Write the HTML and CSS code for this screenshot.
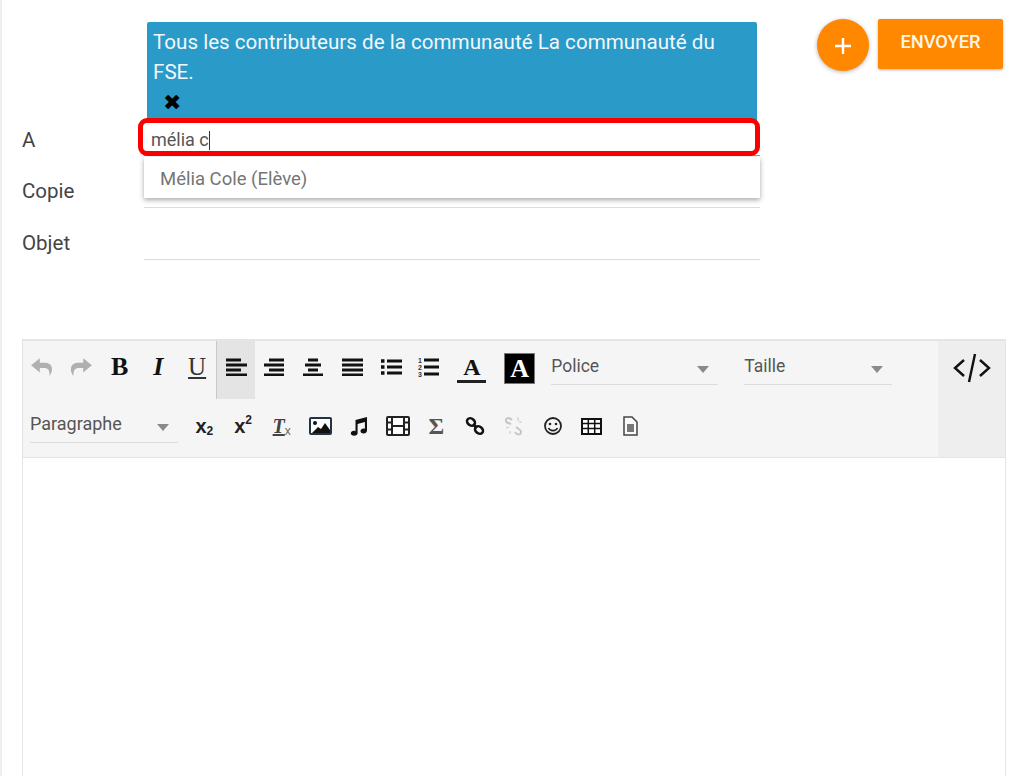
FILE: index.html
```html
<!DOCTYPE html>
<html lang="fr">
<head>
<meta charset="utf-8">
<title>Message</title>
<link rel="stylesheet" href="styles.css">
</head>
<body>
<div class="page">
  <div class="head">
    <form class="fields">
      <div class="row row-to">
        <div class="label label-to">A</div>
        <div class="to-col">
          <div class="chip">
            <div class="chip-text">Tous les contributeurs de la communauté La communauté du FSE.</div>
            <div class="chip-x">✖</div>
          </div>
          <div class="input">
            <span class="typed">mélia c</span><span class="caret"></span>
            <div class="highlight"></div>
            <div class="suggest">Mélia Cole (Elève)</div>
          </div>
        </div>
      </div>
      <div class="row">
        <div class="label">Copie</div>
        <div class="line"></div>
      </div>
      <div class="row">
        <div class="label">Objet</div>
        <div class="line"></div>
      </div>
    </form>
    <div class="actions">
      <div class="fab"><svg width="18" height="18" viewBox="0 0 18 18"><path d="M9 1v16M1 9h16" stroke="#fff" stroke-width="2.4"/></svg></div>
      <div class="send">ENVOYER</div>
    </div>
  </div>

  <div class="editor">
    <div class="toolbar">
      <div class="tools">
        <div class="tool-row row-one">
          <div class="tool"><svg width="24" height="20" viewBox="0 0 22 18"><path fill="#b0b0b0" d="M9 1 1 7.500 9 14v-4h4c3.500 0 5 2 5 7 3.500-4.500 3.500-12-5-12H9z"/></svg></div>
          <div class="tool"><svg width="24" height="20" viewBox="0 0 22 18"><path fill="#b0b0b0" d="M13 1l8 6.500L13 14v-4H9c-3.500 0-5 2-5 7-3.500-4.500-3.500-12 5-12h4z"/></svg></div>
          <div class="tool serif-b">B</div>
          <div class="tool serif-i">I</div>
          <div class="tool serif-u">U</div>
          <div class="tool tool-active"><svg width="22" height="18" viewBox="0 0 22 18"><path d="M1 2h15M1 7h21M1 12h15M1 17h21" stroke="#111" stroke-width="2.800"/></svg></div>
          <div class="tool"><svg width="22" height="18" viewBox="0 0 22 18"><path d="M6 2h15M1 7h20M6 12h15M1 17h20" stroke="#111" stroke-width="2.800"/></svg></div>
          <div class="tool"><svg width="22" height="18" viewBox="0 0 22 18"><path d="M6 2h10M3 7h16M6 12h10M1 17h20" stroke="#111" stroke-width="2.800"/></svg></div>
          <div class="tool"><svg width="22" height="18" viewBox="0 0 22 18"><path d="M1 2h21M1 7h21M1 12h21M1 17h21" stroke="#111" stroke-width="2.800"/></svg></div>
          <div class="tool"><svg width="22" height="18" viewBox="0 0 22 18"><path d="M1 3h3.500M1 9h3.500M1 15h3.500" stroke="#111" stroke-width="3.500"/><path d="M7 3h15M7 9h15M7 15h15" stroke="#111" stroke-width="2.800"/></svg></div>
          <div class="tool"><svg width="22" height="22" viewBox="0 0 22 22"><text x="0" y="7" class="num">1</text><text x="0" y="14" class="num">2</text><text x="0" y="21" class="num">3</text><path d="M6 4h15M6 11h15M6 18h15" stroke="#111" stroke-width="2.800"/></svg></div>
          <div class="tool color-a"><span class="color-a-text">A</span></div>
          <div class="bg-a">A</div>
          <div class="select select-police"><span>Police</span><i class="tri"></i></div>
          <div class="select select-size"><span>Taille</span><i class="tri"></i></div>
        </div>
        <div class="tool-row row-two">
          <div class="select select-para"><span>Paragraphe</span><i class="tri"></i></div>
          <div class="tool sub">x<span class="script script-low">2</span></div>
          <div class="tool sub">x<span class="script script-high">2</span></div>
          <div class="tool clear"><span class="clear-t">T</span><span class="clear-x">x</span></div>
          <div class="tool"><svg width="23" height="18" viewBox="0 0 23 18"><rect x="1" y="1" width="21" height="16" rx="1" fill="#fff" stroke="#234" stroke-width="2"/><circle cx="6" cy="6" r="2" fill="#111"/><path d="M3 16l6-6 3 2 4-6 5 7v3z" fill="#111"/></svg></div>
          <div class="tool"><svg width="20" height="20" viewBox="0 0 20 20"><path fill="#111" d="M6.500 4 18 1v13.500c0 2-1.500 3-3.500 3s-3-1-3-2.500 1.500-2.500 3-2.500c.6 0 1 .1 1.400.3V6L8.600 8v9c0 1.800-1.500 2.800-3.500 2.800S1.800 18.800 1.800 17.300s1.500-2.500 3-2.500c.6 0 1.200.1 1.700.4z"/></svg></div>
          <div class="tool"><svg width="24" height="20" viewBox="0 0 24 20"><rect x="1" y="1" width="22" height="18" rx="1" fill="#fff" stroke="#222" stroke-width="2"/><path d="M6 1v18M18 1v18M1 6.500h5M1 13.500h5M18 6.500h5M18 13.500h5M6 10h12" stroke="#222" stroke-width="2"/></svg></div>
          <div class="tool sigma">Σ</div>
          <div class="tool"><svg width="20" height="20" viewBox="0 0 20 20"><g fill="none" stroke="#111" stroke-width="2.600"><ellipse cx="6" cy="6" rx="4.300" ry="3.400" transform="rotate(40 6 6)"/><ellipse cx="14" cy="14" rx="4.300" ry="3.400" transform="rotate(40 14 14)"/><path d="M8 8l4 4"/></g></svg></div>
          <div class="tool"><svg width="20" height="20" viewBox="0 0 20 20"><g fill="none" stroke="#c6c6c6" stroke-width="2"><path d="M7 8 3 6.500C1 5 2 2 4.500 2 6 2 7 3 8 4"/><path d="M12 11l4 3c2 1.500 1 4.500-1.500 4.500-1.500 0-2.500-1-3.500-2.500"/><path d="M14 1v4M18 6h-3M2 12l3-1M6 18v-3" stroke-width="1"/></g></svg></div>
          <div class="tool"><svg width="20" height="20" viewBox="0 0 20 20"><circle cx="10" cy="10" r="8" fill="none" stroke="#222" stroke-width="1.800"/><circle cx="7" cy="8" r="1.300" fill="#222"/><circle cx="13" cy="8" r="1.300" fill="#222"/><path d="M5.500 12c1.500 3.500 7.500 3.500 9 0" fill="none" stroke="#222" stroke-width="1.600"/></svg></div>
          <div class="tool"><svg width="21" height="17" viewBox="0 0 21 17"><rect x="1" y="1" width="19" height="15" fill="#fff" stroke="#111" stroke-width="2"/><path d="M1 5.500h19M1 10.500h19M7.300 1v15M13.700 1v15" stroke="#111" stroke-width="1.500"/></svg></div>
          <div class="tool"><svg width="16" height="20" viewBox="0 0 16 20"><path d="M2 1h8l5 5v13H2z" fill="#fafafa" stroke="#444" stroke-width="1.500"/><rect x="5" y="8" width="7" height="8" fill="#777"/></svg></div>
        </div>
      </div>
      <div class="code-col"><svg width="38" height="30" viewBox="0 0 38 30"><path d="M11 7 2 15l9 8M27 7l9 8-9 8M22 1l-6 28" fill="none" stroke="#111" stroke-width="2.400"/></svg></div>
    </div>
    <div class="edit-body"></div>
  </div>
</div>
</body>
</html>
```
FILE: styles.css
```css
* { box-sizing: border-box; }
html, body { margin: 0; padding: 0; }
body { font-family: Roboto, "Liberation Sans", sans-serif; background: #fff; color: #333; }
.page { width: 1024px; height: 776px; overflow: hidden; border-left: 2px solid #efefef; padding-left: 20px; }

.head { display: flex; align-items: flex-start; height: 260px; }
.fields { width: 738px; flex: none; }
.row { display: flex; height: 52px; }
.row-to { height: 156px; }
.label { width: 122px; flex: none; font-size: 20.500px; line-height: 26px; color: #444; align-self: flex-end; padding-bottom: 4px; }
.label-to { padding-bottom: 3px; }
.to-col { flex: 1; padding-top: 22px; }
.line { flex: 1; border-bottom: 1px solid #dcdcdc; }
.chip { height: 100px; margin: 0 3px; background: #2a9ac8; border-radius: 2px; padding: 5px 6px 0; color: #f2f8fb; font-size: 20.600px; line-height: 30px; }
.chip-x { color: #000; font-family: "DejaVu Sans", sans-serif; font-size: 22px; line-height: 31px; padding-left: 10px; }
.input { position: relative; height: 34px; padding-left: 7px; font-size: 18px; line-height: 36px; color: #555; border-bottom: 1px solid #ff8800; display: flex; }
.caret { display: block; width: 1px; height: 19px; margin-top: 9px; background: #333; }
.highlight { position: absolute; left: -6px; right: 0; top: -4px; height: 38px; border: 5px solid #fa0000; border-radius: 9px; }
.suggest { position: absolute; left: 0; right: 0; top: 35px; height: 41px; padding-left: 16px; background: #fff; font-size: 18.500px; line-height: 45px; color: #757575; box-shadow: 0 2px 5px rgba(0,0,0,.35); }

.actions { display: flex; align-items: flex-start; gap: 9px; margin: 19px 0 0 57px; }
.fab { width: 52px; height: 52px; border-radius: 50%; background: #ff8800; display: flex; align-items: center; justify-content: center; box-shadow: 0 1px 4px rgba(0,0,0,.3); }
.fab svg { margin-top: 1px; }
.send { width: 125px; height: 50px; background: #ff8800; border-radius: 2px; color: #fff5e6; font-size: 18.300px; font-weight: 500; line-height: 45px; text-align: center; box-shadow: 0 1px 3px rgba(0,0,0,.3); }

.editor { width: 984px; margin-top: 79px; border: 1px solid #e4e4e4; border-top-width: 2px; height: 460px; }
.toolbar { display: flex; height: 117px; background: #f5f5f5; border-bottom: 1px solid #e4e4e4; }
.tools { flex: 1; min-width: 0; }
.code-col { width: 67px; flex: none; background: #eeeeee; display: flex; justify-content: center; align-items: flex-start; padding-top: 12px; }
.edit-body { background: #fff; height: 340px; }

.tool-row { display: flex; align-items: flex-start; }
.row-one { height: 58px; }
.row-two { height: 58px; }
.tool { width: 38.700px; height: 58px; flex: none; display: flex; align-items: center; justify-content: center; color: #111; }
.row-one .tool { padding-bottom: 6px; }
.row-two .tool { padding-bottom: 4px; }
.tool-active { background: #e4e4e4; border-left: 1px solid #c8c8c8; }
.serif-b, .serif-i, .serif-u { font-family: "Liberation Serif", serif; font-size: 22px; }
.serif-b { font-weight: 700; font-size: 26px; }
.serif-i { font-weight: 700; font-style: italic; font-size: 26px; }
.serif-u { text-decoration: underline; color: #333; font-size: 25px; }
.num { font-family: "Liberation Sans", sans-serif; font-size: 7px; font-weight: 700; fill: #333; }
.color-a { margin-left: 4px; font-family: "Liberation Serif", serif; font-weight: 700; font-size: 24px; }
.color-a-text { display: block; width: 29px; text-align: center; line-height: 26px; border-bottom: 3px solid #222; margin-top: 3px; }
.bg-a { flex: none; width: 31px; height: 31px; margin: 12px 0 0 13px; background: #000; color: #fff; border: 1px solid #777; font-family: "Liberation Serif", serif; font-weight: 700; font-size: 26px; line-height: 30px; text-align: center; }
.select { flex: none; position: relative; height: 44px; border-bottom: 1px solid #dcdcdc; font-size: 17.500px; color: #555; line-height: 50px; }
.select span { display: block; }
.select-police { width: 167px; margin-left: 16px; }
.select-size { width: 148px; margin-left: 26px; }
.select-para { width: 148px; margin: 0 7px; }
.select-para span { font-size: 18px; }
.tri { position: absolute; right: 9px; top: 25px; width: 0; height: 0; border-left: 6px solid transparent; border-right: 6px solid transparent; border-top: 7px solid #8a8a8a; }
.sub { font-family: "Liberation Sans", sans-serif; font-size: 20px; font-weight: 700; color: #222; }
.script { font-size: 12px; position: relative; }
.script-low { top: 5px; }
.script-high { top: -6px; }
.clear { font-family: "Liberation Serif", serif; }
.clear-t { font-style: italic; font-size: 20px; font-weight: 700; color: #444; text-decoration: underline; }
.clear-x { font-family: "Liberation Sans", sans-serif; font-size: 12px; color: #666; position: relative; top: 5px; }
.sigma { font-family: "Liberation Serif", serif; font-size: 24px; font-weight: 700; color: #555; }
```
